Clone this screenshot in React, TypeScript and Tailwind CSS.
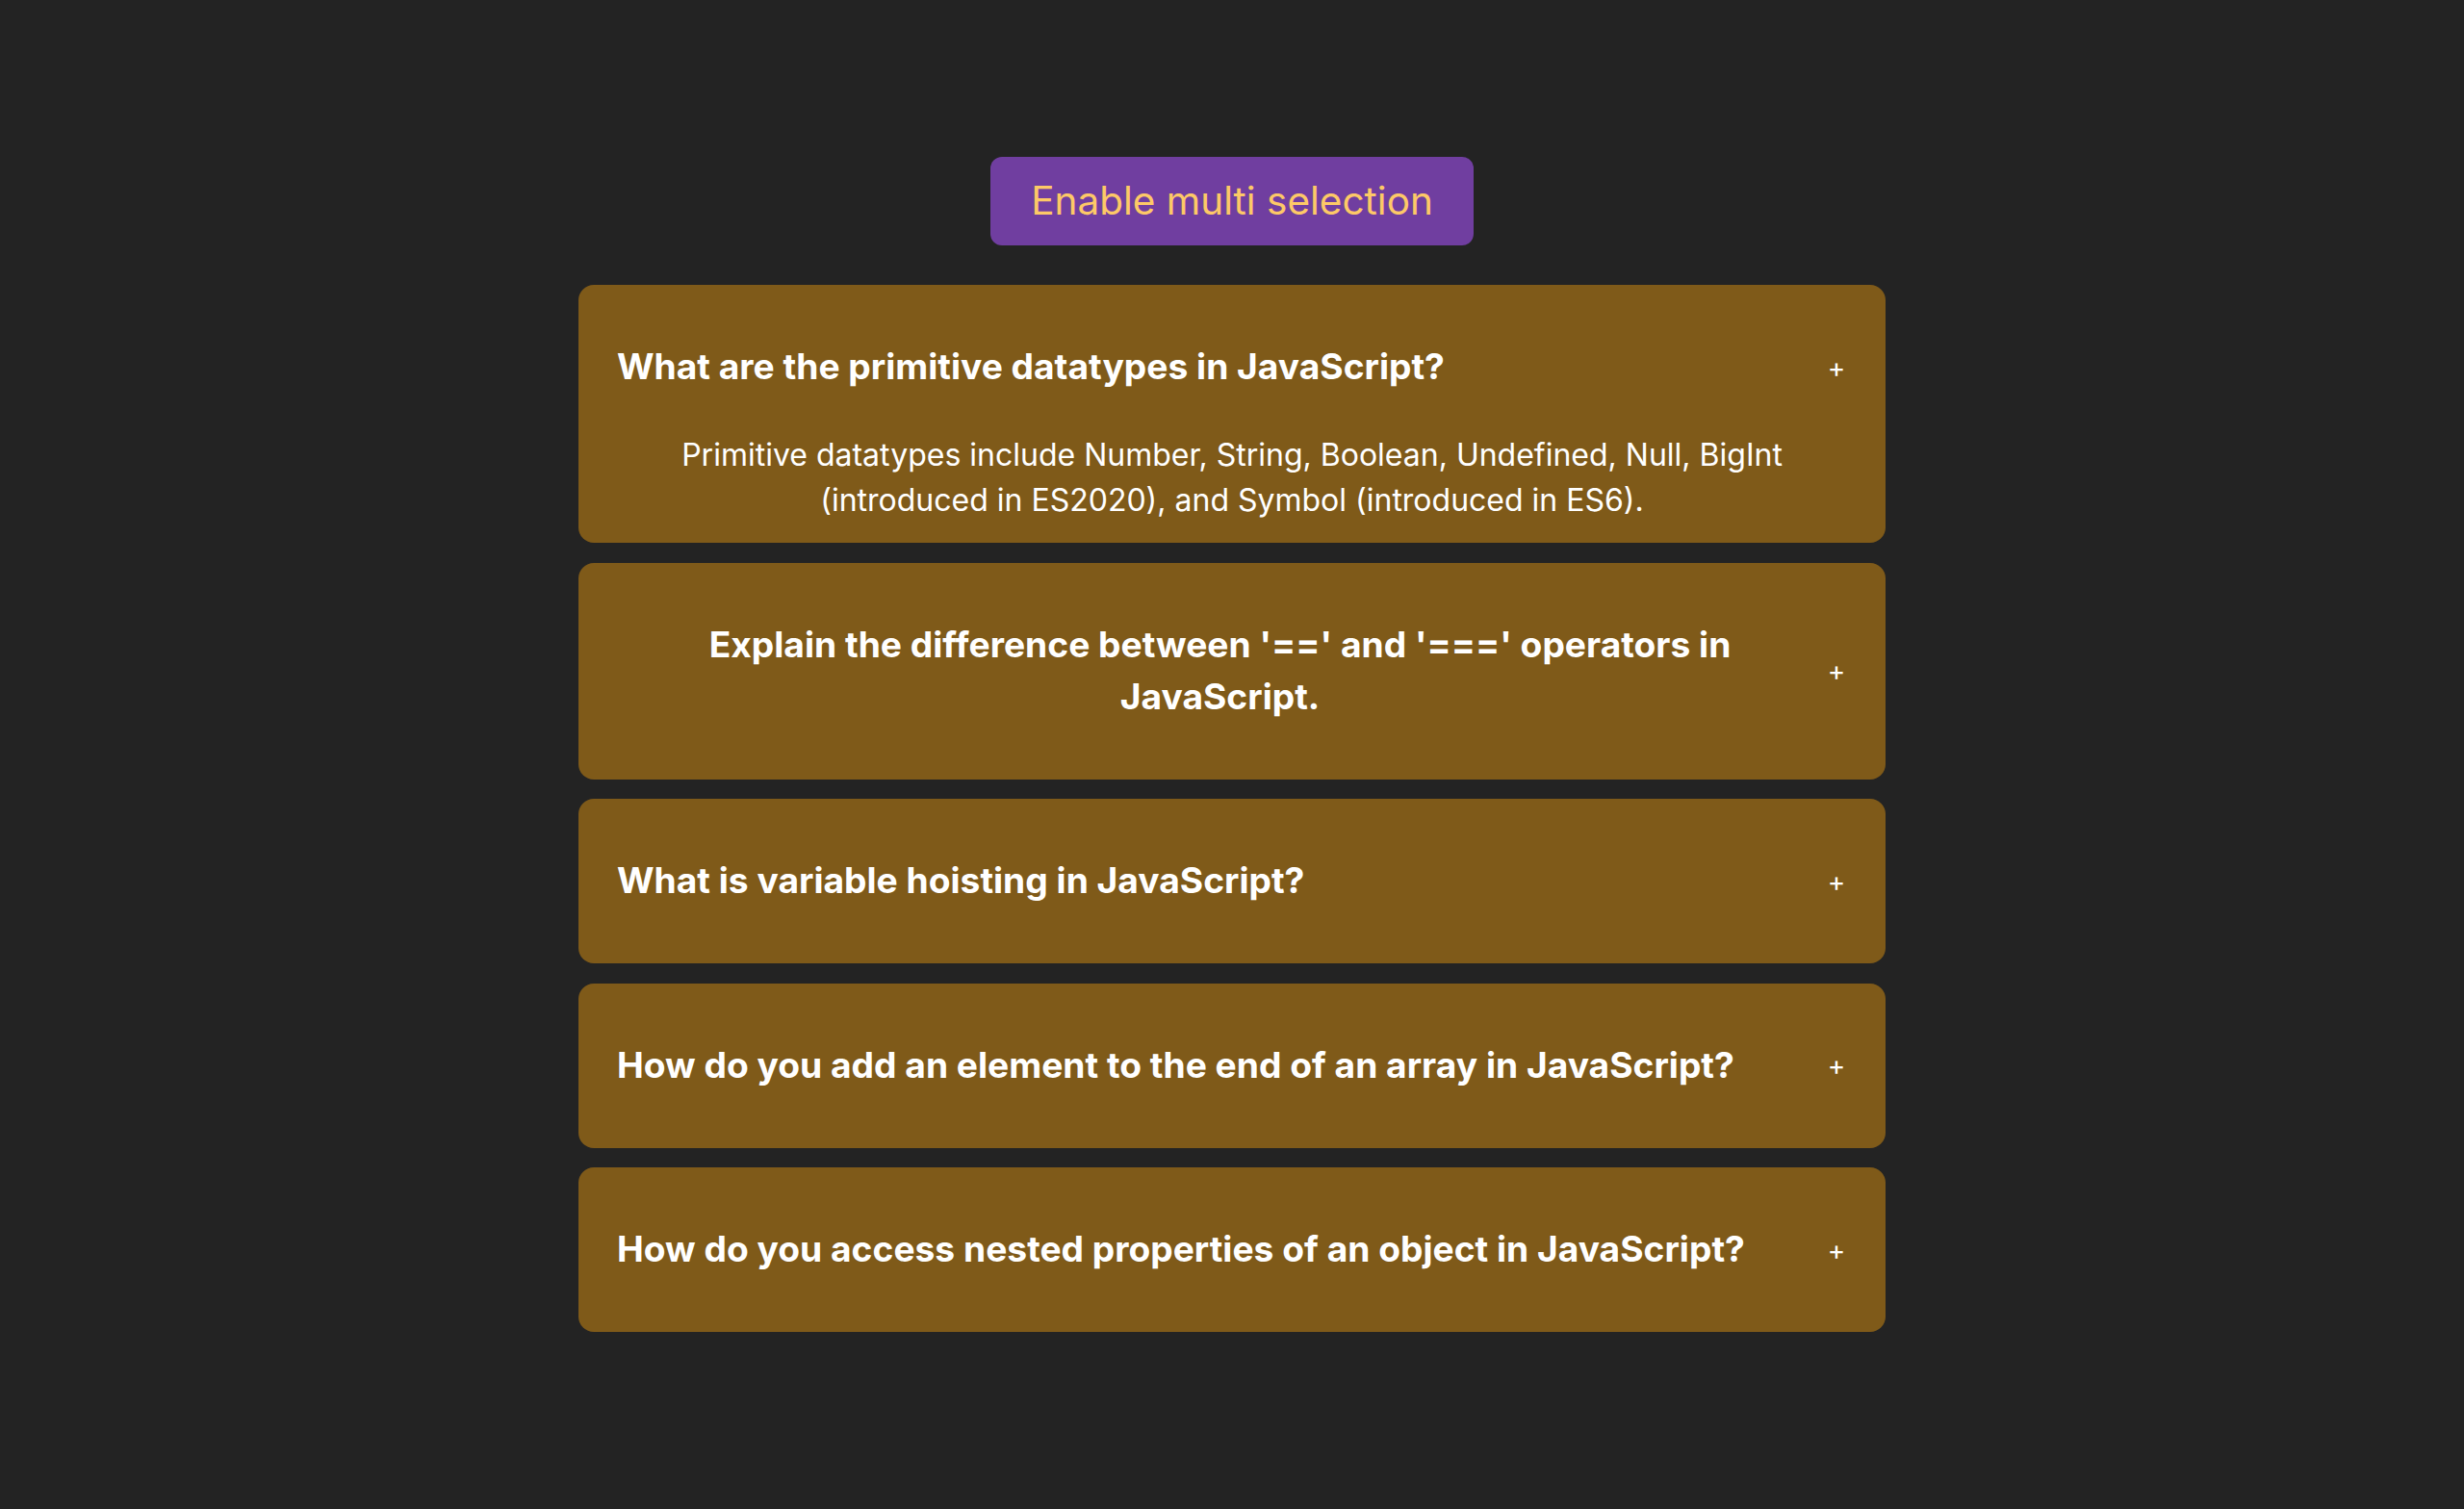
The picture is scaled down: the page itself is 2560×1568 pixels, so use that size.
import { useState } from "react";

const FAQS = [
  {
    q: "What are the primitive datatypes in JavaScript?",
    a: "Primitive datatypes include Number, String, Boolean, Undefined, Null, BigInt (introduced in ES2020), and Symbol (introduced in ES6).",
  },
  {
    q: "Explain the difference between '==' and '===' operators in JavaScript.",
    a: "'==' compares values after type coercion, while '===' compares both value and type without coercion.",
  },
  {
    q: "What is variable hoisting in JavaScript?",
    a: "Hoisting moves variable and function declarations to the top of their scope before code execution.",
  },
  {
    q: "How do you add an element to the end of an array in JavaScript?",
    a: "Use the push() method, e.g. arr.push(item).",
  },
  {
    q: "How do you access nested properties of an object in JavaScript?",
    a: "Use dot or bracket notation, or optional chaining (obj?.a?.b).",
  },
];

export default function App() {
  const [multi, setMulti] = useState(false);
  const [open, setOpen] = useState<number[]>([0]);

  const toggle = (i: number) => {
    if (multi) {
      setOpen(open.includes(i) ? open.filter((x) => x !== i) : [...open, i]);
    } else {
      setOpen(open.includes(i) ? [] : [i]);
    }
  };

  return (
    <div className="min-h-screen bg-[#232323] flex flex-col items-center pt-[163px] font-['Inter',sans-serif]">
      <button
        onClick={() => setMulti(!multi)}
        className="bg-[#703ea0] text-[#fdc967] text-[40.5px] leading-[48px] px-[42px] py-[22px] rounded-[12px]"
      >
        Enable multi selection
      </button>
      <div className="w-[1358px] mt-[41px] flex flex-col gap-[20.5px]">
        {FAQS.map((f, i) => (
          <div key={f.q} className="bg-[#7f5a19] rounded-[16px] px-[40px] py-[20px] text-white">
            <div className="flex items-center justify-between cursor-pointer" onClick={() => toggle(i)}>
              <h3 className="text-[37.2px] leading-[54px] font-bold text-center mt-[38px] mb-[39px] mr-[3px]">{f.q}</h3>
              <span className="text-[28px] leading-none shrink-0 w-[22px] text-center">+</span>
            </div>
            {open.includes(i) && (
              <div className="text-[32px] leading-[47px] text-center px-[60px] pt-[2px] mb-[1px]">{f.a}</div>
            )}
          </div>
        ))}
      </div>
    </div>
  );
}
